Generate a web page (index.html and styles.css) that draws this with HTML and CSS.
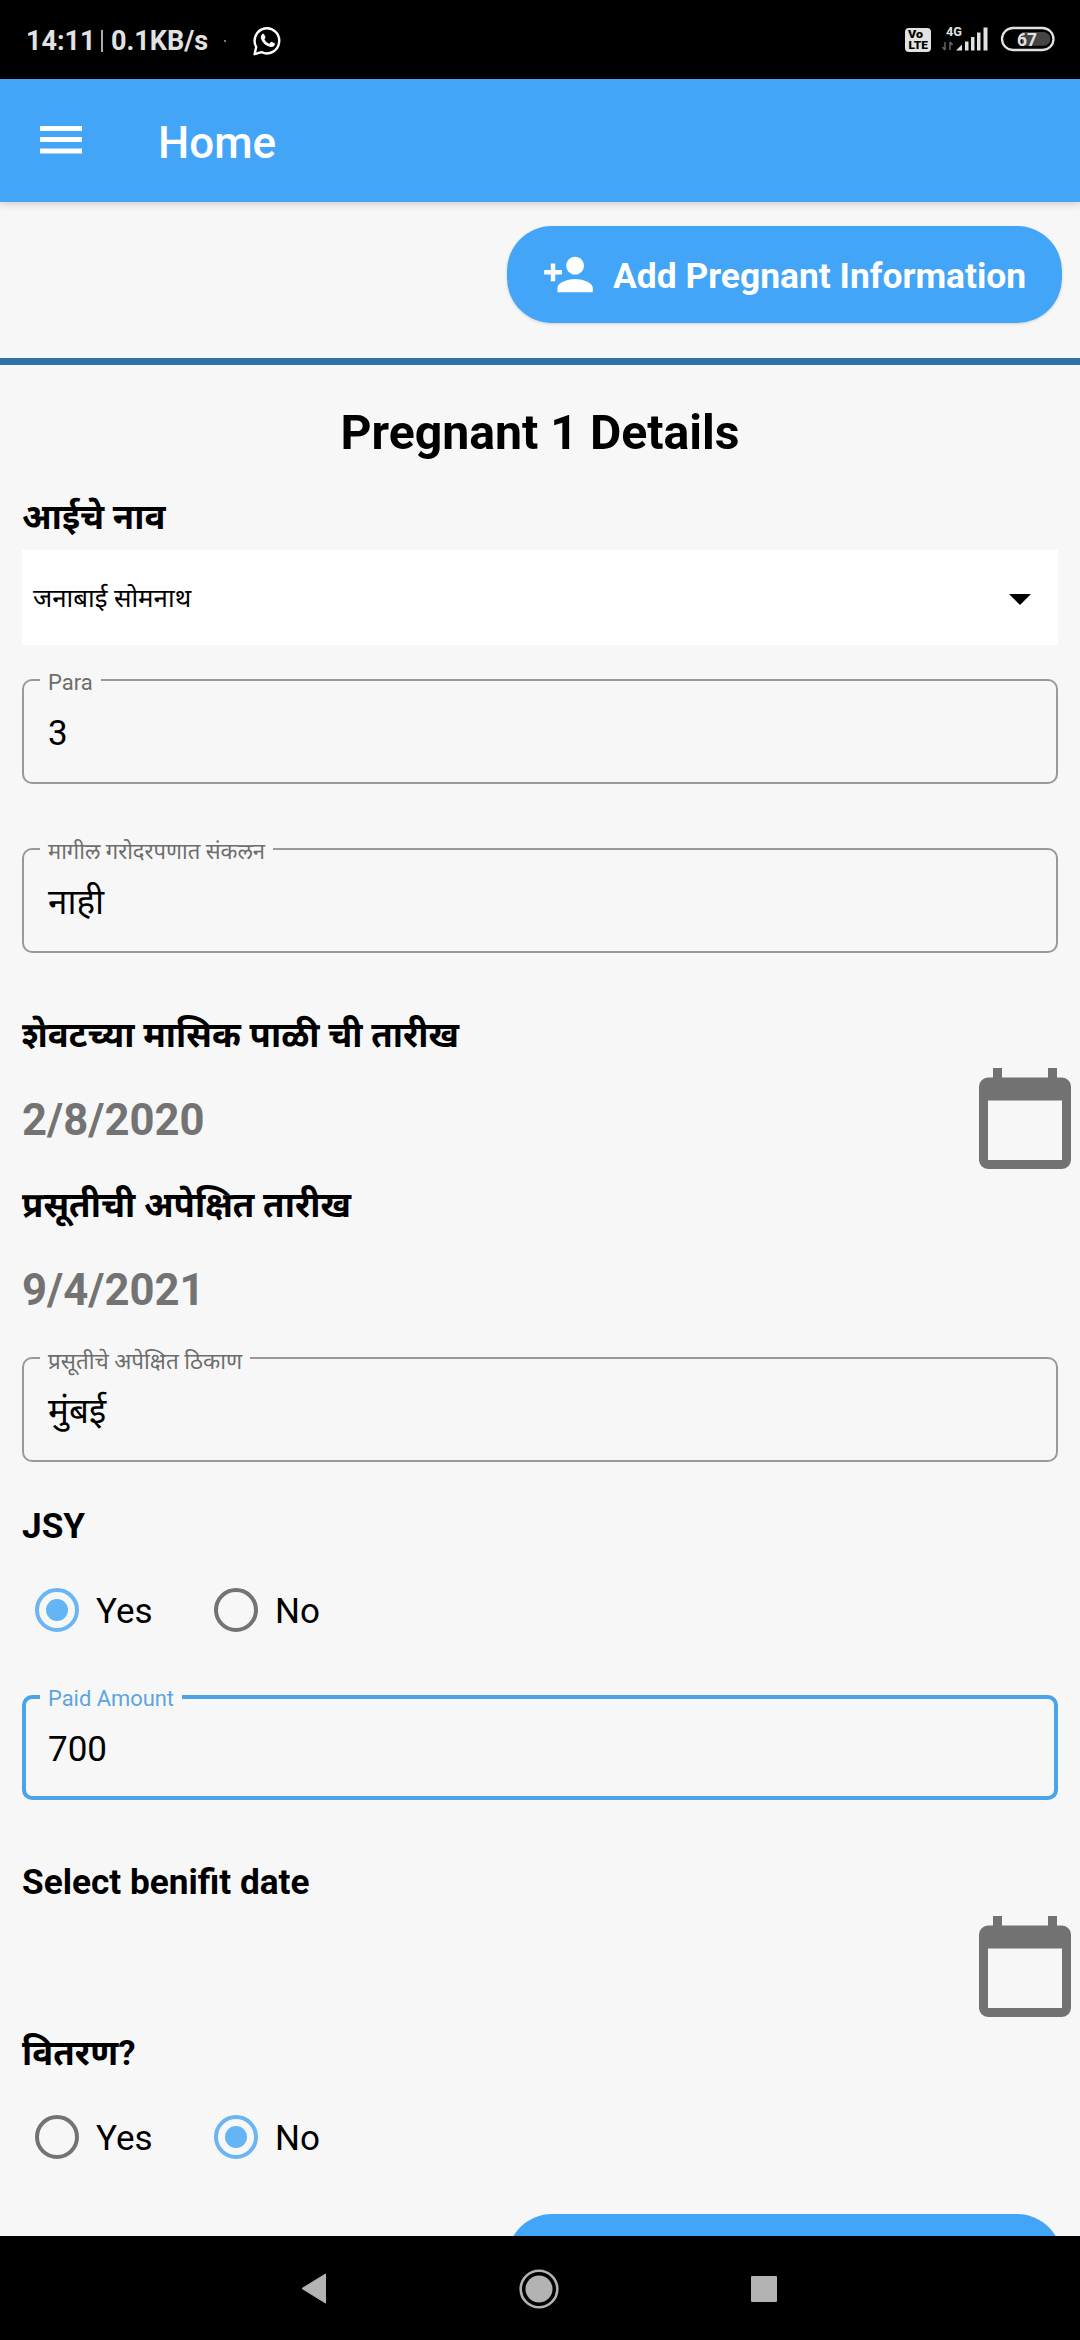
FILE: index.html
```html
<!DOCTYPE html>
<html lang="mr">
<head>
<meta charset="utf-8">
<title>Home</title>
<link rel="stylesheet" href="styles.css">
</head>
<body>
<div class="screen">
  <header class="status">
    <span class="clock">14:11</span>
    <span class="bar"></span>
    <span class="speed">0.1KB/s</span>
    <span class="dot"></span>
    <svg class="whatsapp" width="28" height="30" viewBox="0 0 28 30"><path d="M1.600 28.200 L3.200 21 A12.300 12.600 0 1 1 8.600 26.200 Z" fill="none" stroke="#fff" stroke-width="2.400" stroke-linejoin="round"/><path d="M9.200 8.200c.7-.7 1.600-.6 2 .2l1.200 2.700c.2.600-.1 1.100-1 2.100 1.100 2.200 2.700 3.700 4.900 4.600l1.400-1.600c.4-.4.800-.4 1.300-.2l2.500 1.300c.5.3.5.8.3 1.500-.6 1.700-2.200 2.400-3.900 2.200-5-.8-9.300-5-10-9.300-.2-1.400.4-2.700 1.300-3.500z" fill="#fff"/></svg>
    <svg class="indicators" width="152" height="46" viewBox="0 -8 152 46">
      <rect x="1" y="2" width="26" height="24" rx="4" fill="#e2e2e2"/>
      <text x="4" y="12.300" class="volte" textLength="15" lengthAdjust="spacingAndGlyphs">Vo</text>
      <text x="4.500" y="22.800" class="volte" textLength="19.500" lengthAdjust="spacingAndGlyphs">LTE</text>
      <text x="42" y="9.800" class="net" textLength="16" lengthAdjust="spacingAndGlyphs">4G</text>
      <path d="M41 16v8m-2.500-3l2.500 3M46 24v-8m2.500 3L46 16" stroke="#666" stroke-width="1.500" fill="none"/>
      <path d="M52 24.500l6-6v6zM61 15.500h3.500v9H61zM67 11h3.500v13.500H67zM73 6.500h3.500v18H73zM79.500 1.500h4v23h-4z" fill="#e2e2e2"/>
      <path d="M118 6h21.500a6.900 6.900 0 0 1 0 13.800H118z" fill="#444"/>
      <rect x="98" y="2" width="51.500" height="22" rx="11" fill="none" stroke="#e2e2e2" stroke-width="2.300"/>
      <text x="113" y="20" class="charge" textLength="20" lengthAdjust="spacingAndGlyphs">67</text>
    </svg>
  </header>
  <nav class="appbar">
    <svg class="menu" width="42" height="28" viewBox="0 0 42 28"><path d="M0 0h42v5H0zM0 11h42v5H0zM0 22.500h42v5H0z" fill="#fff"/></svg>
    <h1 class="appbar-title">Home</h1>
  </nav>
  <main class="content">
    <div class="toolbar">
      <button class="add">
        <svg width="53" height="53" viewBox="0 0 24 24"><path fill="#fff" d="M15 12c2.210 0 4-1.790 4-4s-1.790-4-4-4-4 1.790-4 4 1.790 4 4 4zm-9-2V7H4v3H1v2h3v3h2v-3h3v-2H6zm9 4c-2.670 0-8 1.340-8 4v2h16v-2c0-2.660-5.330-4-8-4z"/></svg>
        <span class="add-text">Add Pregnant Information</span>
      </button>
    </div>
    <h2 class="title">Pregnant 1 Details</h2>
    <div class="label name-label">आईचे नाव</div>
    <div class="select"><span class="selected">जनाबाई सोमनाथ</span><svg class="caret" width="22" height="11" viewBox="0 0 22 11"><path d="M0 0h22L11 11z"/></svg></div>
    <div class="field para"><span class="legend">Para</span><span class="value">3</span></div>
    <div class="field previous"><span class="legend">मागील गरोदरपणात संकलन</span><span class="value">नाही</span></div>
    <div class="label lmp-label">शेवटच्या मासिक पाळी ची तारीख</div>
    <div class="date lmp"><span>2/8/2020</span>
      <svg class="calendar" width="92" height="101" viewBox="0 0 92 101"><path fill="#727272" fill-rule="evenodd" d="M14 0h9v9.500h46V0h9v9.500h5a9 9 0 0 1 9 9V92a9 9 0 0 1-9 9H9a9 9 0 0 1-9-9V18.500a9 9 0 0 1 9-9h5zM9 32.500V92h74V32.500z"/></svg>
    </div>
    <div class="label edd-label">प्रसूतीची अपेक्षित तारीख</div>
    <div class="date edd"><span>9/4/2021</span></div>
    <div class="field place"><span class="legend">प्रसूतीचे अपेक्षित ठिकाण</span><span class="value">मुंबई</span></div>
    <div class="label latin jsy-label">JSY</div>
    <div class="radios jsy">
      <div class="radio on"><i></i><span>Yes</span></div>
      <div class="radio"><i></i><span>No</span></div>
    </div>
    <div class="field paid focus"><span class="legend">Paid Amount</span><span class="value">700</span></div>
    <div class="label latin benefit-label">Select benifit date</div>
    <div class="date benefit"><span></span>
      <svg class="calendar" width="92" height="101" viewBox="0 0 92 101"><path fill="#727272" fill-rule="evenodd" d="M14 0h9v9.500h46V0h9v9.500h5a9 9 0 0 1 9 9V92a9 9 0 0 1-9 9H9a9 9 0 0 1-9-9V18.500a9 9 0 0 1 9-9h5zM9 32.500V92h74V32.500z"/></svg>
    </div>
    <div class="label delivery-label">वितरण?</div>
    <div class="radios delivery">
      <div class="radio"><i></i><span>Yes</span></div>
      <div class="radio on"><i></i><span>No</span></div>
    </div>
    <div class="next-button"></div>
  </main>
  <footer class="navbar">
    <svg width="26" height="31" viewBox="0 0 26 31"><path d="M24.500 1v29L1 15.500z" fill="#b3b3b3" stroke="#b3b3b3" stroke-linejoin="round"/></svg>
    <svg width="40" height="40" viewBox="0 0 40 40"><circle cx="20" cy="20" r="18.300" fill="none" stroke="#b3b3b3" stroke-width="2.600"/><circle cx="20" cy="20" r="13.500" fill="#b3b3b3"/></svg>
    <svg width="26" height="26" viewBox="0 0 26 26"><rect width="26" height="26" rx="1" fill="#b3b3b3"/></svg>
  </footer>
</div>
</body>
</html>
```
FILE: styles.css
```css
* { box-sizing: border-box; }
body {
  margin: 0;
  font-family: Roboto, "Noto Sans Devanagari", "Noto Sans", sans-serif;
  color: #000;
}
svg { display: block; flex: none; }
.screen {
  width: 1080px;
  height: 2340px;
  display: flex;
  flex-direction: column;
  overflow: hidden;
  background: #f7f7f7;
}

/* system status bar */
.status {
  height: 79px;
  flex: none;
  padding: 2px 24px 0 26px;
  display: flex;
  align-items: center;
  background: #000;
  color: #e2e2e2;
  font-size: 27px;
  font-weight: 700;
  white-space: nowrap;
}
.clock { width: 66px; }
.bar { width: 2px; height: 22px; margin: 0 8px 0 9px; background: #aaa; }
.speed { width: 96px; }
.dot { width: 2px; height: 2px; margin: 0 27px 0 17px; background: #777; }
.indicators { margin-left: auto; }
.volte { font: 900 11px Roboto, sans-serif; fill: #000; }
.net { font: 700 13px Roboto, sans-serif; fill: #e2e2e2; }
.charge { font: 700 19px Roboto, sans-serif; fill: #e2e2e2; }

/* app bar */
.appbar {
  height: 123px;
  flex: none;
  padding-left: 40px;
  display: flex;
  align-items: center;
  gap: 76px;
  background: #42a5f8;
  box-shadow: 0 2px 8px rgba(0, 0, 0, .18);
  color: #fff;
  position: relative;
}
.menu { margin-bottom: 1px; }
.appbar-title {
  margin: 4px 0 0;
  font-size: 44px;
  font-weight: 500;
}

/* form */
.content { flex: 1; min-height: 0; overflow: hidden; }
.toolbar {
  height: 163px;
  padding: 24px 18px 0 0;
  display: flex;
  justify-content: flex-end;
  align-items: flex-start;
  border-bottom: 7px solid #2f72a8;
}
.add {
  width: 555px;
  height: 97px;
  padding: 0 0 0 35px;
  display: flex;
  align-items: center;
  gap: 18px;
  border: 0;
  border-radius: 45px;
  background: #42a5f8;
  box-shadow: 0 1px 3px rgba(0, 0, 0, .16);
  color: #fff;
  font: 700 35.400px Roboto, sans-serif;
  white-space: nowrap;
}
.add svg { margin-bottom: 1px; }
.add-text { padding-top: 3px; }
.title {
  margin: 0;
  padding-top: 16px;
  font-size: 48.200px;
  font-weight: 700;
  line-height: 103px;
  text-align: center;
}
.label {
  padding: 1px 0 0 22px;
  font-size: 34.800px;
  font-weight: 700;
  white-space: nowrap;
}
.latin { font-size: 35.200px; }
.name-label { line-height: 65px; }
.lmp-label { margin-top: 51px; line-height: 60px; }
.edd-label { line-height: 55px; }
.jsy-label { margin-top: 34px; line-height: 59px; }
.benefit-label { margin-top: 50px; line-height: 63px; }
.delivery-label { padding-top: 2px; line-height: 66px; }
.select {
  height: 95px;
  margin: 0 22px;
  padding: 0 27px 0 11px;
  display: flex;
  align-items: center;
  justify-content: space-between;
  background: #fff;
  font-size: 25.900px;
}
.selected { padding-top: 6px; }
.caret { margin-top: 3px; }
.field {
  position: relative;
  height: 105px;
  margin: 0 22px;
  padding: 0 0 0 24px;
  border: 2px solid #999;
  border-radius: 10px;
  font-size: 35px;
  line-height: 105px;
}
.legend {
  position: absolute;
  left: 16px;
  top: -12px;
  padding: 0 8px;
  background: #f7f7f7;
  color: #6d6d6d;
  font-size: 22px;
  line-height: 28px;
  white-space: nowrap;
}
.place .legend { font-size: 22.400px; }
.para { margin-top: 34px; }
.previous { margin-top: 64px; }
.place { margin-top: 8px; }
.paid { margin-top: 31px; }
.field.focus { padding-left: 22px; border: 4px solid #4ba3e8; line-height: 102px; }
.focus .legend { left: 14px; top: -14px; color: #5ba6e0; font-size: 21.900px; }
.date {
  padding: 0 9px 0 22px;
  display: flex;
  align-items: center;
  justify-content: space-between;
  color: #737373;
  font-size: 43.600px;
  font-weight: 700;
}
.date span { padding-bottom: 1px; }
.lmp { height: 112px; }
.lmp .calendar { margin-bottom: 5px; }
.edd { height: 116px; }
.benefit { height: 104px; }
.radios {
  padding-left: 35px;
  display: flex;
  align-items: center;
  font-size: 35px;
}
.radio { width: 179px; display: flex; align-items: center; gap: 17px; }
.radio span { padding-top: 2px; }
.radio i {
  width: 44px;
  height: 44px;
  display: grid;
  place-items: center;
  border: 4px solid #737373;
  border-radius: 50%;
}
.radio.on i { border-color: #6bb5f3; }
.radio.on i::after {
  content: "";
  width: 22px;
  height: 22px;
  border-radius: 50%;
  background: #64b5f6;
}
.jsy { height: 108px; }
.delivery { height: 102px; }
.next-button {
  width: 555px;
  height: 97px;
  margin: 26px 18px 0 auto;
  border-radius: 45px;
  background: #42a5f8;
}

/* system navigation */
.navbar {
  height: 104px;
  flex: none;
  padding: 1px 303px 0 301px;
  display: flex;
  align-items: center;
  justify-content: space-between;
  background: #000;
}
```
